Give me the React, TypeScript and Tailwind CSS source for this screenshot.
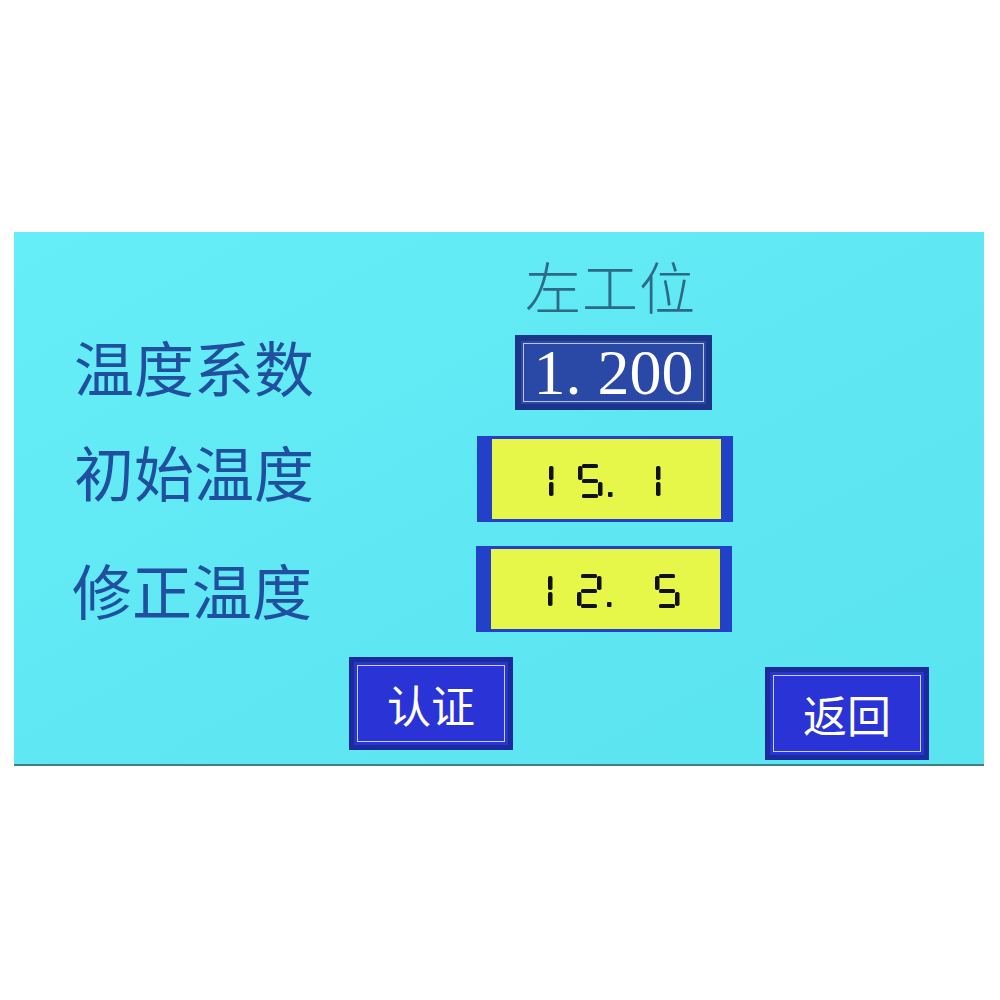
import type { ReactNode } from 'react'

const CJK = { fontFamily: '"Noto Sans CJK SC", "Noto Sans", sans-serif' }

// segment sets for the little lcd readouts; "1" sits on the left like on the panel
const SEGS: Record<string, string[]> = {
  '1': ['f', 'e'],
  '2': ['a', 'b', 'g', 'e', 'd'],
  '5': ['a', 'f', 'g', 'c', 'd']
}

function Digit({ ch }: { ch: string }) {
  if (ch === '.') {
    return (
      <svg width="10" height="34" viewBox="0 0 10 34">
        <rect x="2" y="28" width="4.5" height="5" rx="1" fill="#111" />
      </svg>
    )
  }
  if (ch === ' ') return <span className="inline-block w-[33px]" />
  const on = SEGS[ch] ?? []
  const seg: Record<string, ReactNode> = {
    a: <rect key="a" x="5" y="0" width="16" height="4" rx="1.5" />,
    b: <rect key="b" x="21" y="2" width="4.5" height="14" rx="1.8" />,
    c: <rect key="c" x="21" y="18" width="4.5" height="14" rx="1.8" />,
    d: <rect key="d" x="5" y="30" width="16" height="4" rx="1.5" />,
    e: <rect key="e" x="1" y="18" width="4.5" height="14" rx="1.8" />,
    f: <rect key="f" x="1" y="2" width="4.5" height="14" rx="1.8" />,
    g: <rect key="g" x="5" y="15" width="16" height="4" rx="1.5" />
  }
  return (
    <svg width="26" height="34" viewBox="0 0 26 34" fill="#111">
      {on.map((s) => seg[s])}
    </svg>
  )
}

function Lcd({ value }: { value: string }) {
  return (
    <div className="flex h-[86px] w-[256px] items-center border-y-[3px] border-l-[15px] border-r-[12px] border-[#2340c8] bg-[#e6f74a] pl-[56px] pt-[4px]">
      <div className="flex items-end gap-[3px]">
        {value.split('').map((c, i) => (
          <Digit key={i} ch={c} />
        ))}
      </div>
    </div>
  )
}

function Btn({ label }: { label: string }) {
  return (
    <div className="h-[93px] w-[164px] border-[5px] border-[#1b2a9c] bg-[#2a33d6] p-[3px]">
      <div
        className="flex h-full w-full items-center justify-center border border-[#c9d2ff] text-[44px] text-white"
        style={CJK}
      >
        {label}
      </div>
    </div>
  )
}

export default function App() {
  return (
    <div className="h-[1000px] w-[1000px] bg-white pt-[232px] pl-[14px]">
      <div className="h-[534px] w-[970px] border-b-2 border-[#3f7f8c] bg-gradient-to-br from-[#66eef8] via-[#5fe8f3] to-[#5ae4ef]">
        <div
          className="pl-[511px] pt-[18px] text-[56px] leading-[70px] font-light tracking-[1px] text-[#2d6a86]"
          style={CJK}
        >
          左工位
        </div>

        <div className="mt-[15px] flex items-start">
          <div className="-mt-[6px] w-[440px] pl-[60px] text-[60px] leading-[74px] text-[#1f4f9e]" style={CJK}>
            温度系数
          </div>
          <div className="ml-[61px] h-[75px] w-[197px] border-[6px] border-[#1c3589] bg-[#2a48a6] p-[2px]">
            <div
              className="flex h-full w-full items-center justify-center border border-[#b9c6ef] text-[64px] leading-none text-white"
              style={{ fontFamily: '"Liberation Serif", "DejaVu Serif", serif' }}
            >
              1. 200
            </div>
          </div>
        </div>

        <div className="mt-[26px] flex items-start">
          <div className="-mt-[2px] w-[463px] pl-[60px] text-[60px] leading-[74px] text-[#1f4f9e]" style={CJK}>
            初始温度
          </div>
          <Lcd value="15. 1" />
        </div>

        <div className="mt-[24px] flex items-start">
          <div className="mt-[6px] w-[462px] pl-[58px] text-[60px] leading-[74px] text-[#1f4f9e]" style={CJK}>
            修正温度
          </div>
          <Lcd value="12. 5" />
        </div>

        <div className="mt-[25px] flex items-start">
          <div className="ml-[335px]">
            <Btn label="认证" />
          </div>
          <div className="ml-[252px] mt-[10px]">
            <Btn label="返回" />
          </div>
        </div>
      </div>
    </div>
  )
}
